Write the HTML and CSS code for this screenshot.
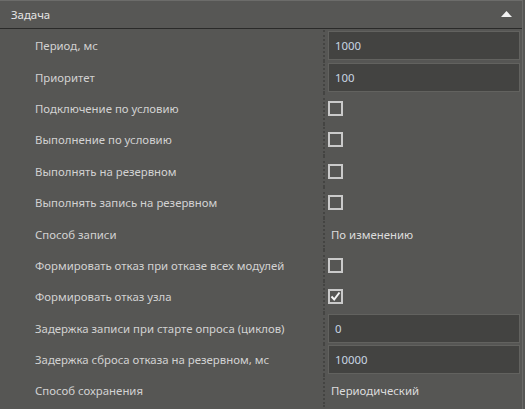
FILE: index.html
```html
<!DOCTYPE html>
<html>
  <head>
    <title>Задача</title>
    <link rel="stylesheet" href="styles.css">
  </head>
  <body>
    <div class="panel">
      <div class="head">
        <span>Задача</span>
        <svg class="arrow" width="11" height="6" viewBox="0 0 11 6"><polygon points="0,6 5.5,0 11,6" fill="#f2f2f2"/></svg>
      </div>
      <div class="rows">
        <div class="row"><div class="name">Период, мс</div><div class="val"><div class="field">1000</div></div></div>
        <div class="row"><div class="name">Приоритет</div><div class="val"><div class="field">100</div></div></div>
        <div class="row"><div class="name">Подключение по условию</div><div class="val"><span class="box"></span></div></div>
        <div class="row"><div class="name">Выполнение по условию</div><div class="val"><span class="box"></span></div></div>
        <div class="row"><div class="name">Выполнять на резервном</div><div class="val"><span class="box"></span></div></div>
        <div class="row"><div class="name">Выполнять запись на резервном</div><div class="val"><span class="box"></span></div></div>
        <div class="row"><div class="name">Способ записи</div><div class="val"><span class="text">По изменению</span></div></div>
        <div class="row"><div class="name">Формировать отказ при отказе всех модулей</div><div class="val"><span class="box"></span></div></div>
        <div class="row"><div class="name">Формировать отказ узла</div><div class="val"><span class="box checked"><svg width="11" height="11" viewBox="0 0 11 11"><polyline points="1.5,5.5 4.2,8.5 9.5,1.5" fill="none" stroke="#f4f4f4" stroke-width="2"/></svg></span></div></div>
        <div class="row"><div class="name">Задержка записи при старте опроса (циклов)</div><div class="val"><div class="field">0</div></div></div>
        <div class="row"><div class="name">Задержка сброса отказа на резервном, мс</div><div class="val"><div class="field">10000</div></div></div>
        <div class="row"><div class="name">Способ сохранения</div><div class="val"><span class="text">Периодический</span></div></div>
      </div>
    </div>
  </body>
</html>
```

FILE: styles.css
```css
body { margin: 0; background: #565654; font-family: "Noto Sans", "Open Sans", sans-serif; font-size: 11.4px; color: #d6d6d6; }

.panel { width: 523px; height: 409px; box-sizing: border-box; border-right: 1px solid #6a6a68; border-top: 1px solid #6c6c6a; overflow: hidden; }

.head { height: 27px; display: flex; align-items: center; justify-content: space-between; padding: 0 10px 0 11px; background: #575755; border-bottom: 1px solid #2a2a29; color: #e6e6e6; }
.arrow { margin-top: -1px; }

.rows { padding-top: 1px; }
.row { display: flex; height: 31.4px; }
.name { width: 323px; box-sizing: border-box; padding-left: 35px; display: flex; align-items: center; color: #d2d2d2; white-space: nowrap; }
.val { flex: 1; display: flex; align-items: center; padding-left: 3px; padding-right: 2px; border-left: 2px dotted #444442; }

.field { flex: 1; height: 29px; box-sizing: border-box; border: 1px solid #62625f; background: #434341; color: #c9d6e2; display: flex; align-items: center; padding-left: 6px; }
.text { padding-left: 3px; color: #dcdcdc; }

.box { width: 15px; height: 15px; box-sizing: border-box; border: 2px solid #cacaca; display: flex; align-items: center; justify-content: center; }
```
